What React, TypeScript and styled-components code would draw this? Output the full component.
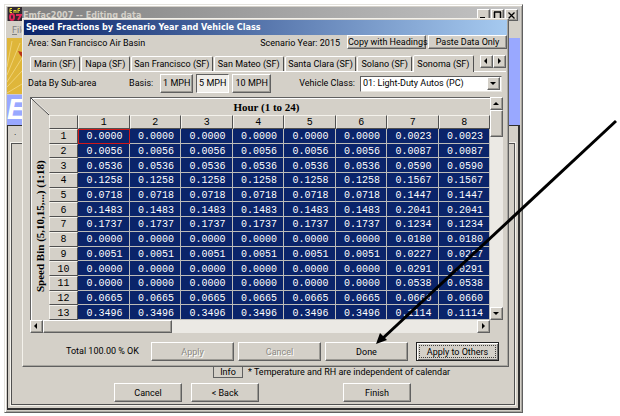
import React, { useState } from "react";
import styled, { createGlobalStyle, css } from "styled-components";

const face = "#d4d0c8";
const navy = "#0a246a";
const sans = `Roboto, "Liberation Sans", Arial, sans-serif`;

const GlobalStyle = createGlobalStyle`
  * { box-sizing: border-box; }
  body { margin: 0; background: #fff; color: #000; font: 9px/13px ${sans}; }
  button, select { font: inherit; color: inherit; margin: 0; padding: 0; border-radius: 0; }
`;

const raised = css`
  border: 1px solid;
  border-color: #fff #606060 #606060 #fff;
  box-shadow: inset -1px -1px 0 #9c9a94;
`;

const Stage = styled.main`
  position: relative;
  display: grid;
  grid-template-columns: minmax(0, 1fr) 97px;
  padding: 4px 0 3px 4px;
  overflow: hidden;
`;

const AppWindow = styled.section`
  display: grid;
  grid-template-columns: minmax(0, 1fr);
  background: ${face};
  border: 1px solid;
  border-color: #e4e2dc #606060 #606060 #e4e2dc;
  box-shadow: inset 1px 1px 0 #fff, inset -1px -1px 0 #a8a6a0;
  padding: 2px;
`;

const Backdrop = styled.div`
  grid-area: 1 / 1;
  display: flex;
  flex-direction: column;
  min-width: 0;
`;

const AppTitle = styled.header`
  display: flex;
  height: 14px;
  background: linear-gradient(90deg, #7e7e7e, #c4c4c4);
  color: ${face};
  font: bold 9px/14px "DejaVu Sans Condensed", "DejaVu Sans", sans-serif;
`;

const AppName = styled.span`
  flex: 1;
  padding: 1px 0 0 1px;
`;

const WindowButtons = styled.div`
  display: flex;
  gap: 1px;
  padding: 2px 2px 0 0;
`;

const WindowButton = styled.button`
  ${raised}
  display: grid;
  place-items: center;
  width: 13px;
  height: 12px;
  background: ${face};
`;

const MenuBar = styled.nav`
  height: 17px;
  padding: 3px 5px;
  color: #808080;
`;

const Banner = styled.div`
  height: 87px;
  background: #99a8ff;
`;

const Lower = styled.div`
  flex: 1;
  display: flex;
  flex-direction: column;
  border: 1px solid #303030;
  border-right-width: 2px;
  border-bottom-width: 2px;
  padding: 0 3px 3px 3px;
`;

const ToolStrip = styled.div`
  height: 17px;
  padding-left: 3px;
`;

const WizardFrame = styled.div`
  flex: 1;
  display: flex;
  flex-direction: column;
  justify-content: flex-end;
  border: 1px solid #505050;
  box-shadow: 0 0 0 1px #f4f2ec;
  padding-bottom: 2px;
`;

const NoteRow = styled.div`
  display: flex;
  gap: 5px;
  padding-left: 201px;
  height: 12px;
  white-space: nowrap;
`;

const InfoButton = styled.button`
  width: 30px;
  background: ${face};
  border: 1px solid #606060;
  line-height: 10px;
`;

const WizardButtons = styled.div`
  display: flex;
  gap: 9px;
  padding: 5px 0 0 102px;
`;

const PushButton = styled.button<{ $width?: number; $primary?: boolean; $apart?: boolean }>`
  ${raised}
  flex: none;
  width: ${(p) => p.$width ?? 83}px;
  height: 19px;
  background: ${face};
  line-height: 16px;
  margin-left: ${(p) => (p.$apart ? "75px" : 0)};
  ${(p) => p.$primary && css`
    border-color: #202020;
    box-shadow: inset 1px 1px 0 #fff, inset -1px -1px 0 #707070;
    outline: 1px dotted #404040;
    outline-offset: -4px;
  `}
  &:disabled { color: #8c8a84; text-shadow: 1px 1px 0 #fff; }
`;

const Dialog = styled.section`
  grid-area: 1 / 1;
  z-index: 1;
  align-self: start;
  margin: 11px 11px 43px 15px;
  background: ${face};
  border: 1px solid;
  border-color: #f4f2ec #606060 #606060 #f4f2ec;
  box-shadow: inset -1px -1px 0 #a8a6a0;
  padding: 1px 1px 5px;
`;

const DialogTitle = styled.h1`
  margin: 0;
  height: 15px;
  padding-left: 2px;
  background: linear-gradient(90deg, ${navy}, #a6caf0);
  color: #fff;
  font: bold 9px/14px "DejaVu Sans Condensed", "DejaVu Sans", sans-serif;
  white-space: nowrap;
`;

const AreaRow = styled.div`
  display: flex;
  gap: 2px;
  height: 20px;
  padding-left: 4px;
  white-space: nowrap;
`;

const Area = styled.span`
  flex: 1;
  padding-top: 2px;
`;

const Scenario = styled.span`
  padding: 2px 5px 0 0;
`;

const SmallButton = styled.button`
  ${raised}
  width: 79px;
  height: 14px;
  line-height: 11px;
  background: ${face};
  white-space: nowrap;
`;

const TabRow = styled.div`
  display: flex;
  align-items: flex-end;
  height: 17px;
  margin: 0 1px 0 6px;
  border-bottom: 1px solid #fff;
`;

const Tab = styled.button<{ $grow: number; $active: boolean }>`
  flex: ${(p) => p.$grow} 1 0;
  min-width: 0;
  height: ${(p) => (p.$active ? 17 : 15)}px;
  margin-bottom: ${(p) => (p.$active ? "-1px" : 0)};
  margin-right: 1px;
  background: ${face};
  border: 1px solid;
  border-color: #fff #505050 transparent #fff;
  border-bottom-width: 0;
  border-radius: 2px 2px 0 0;
  white-space: nowrap;
`;

const TabScroll = styled.div`
  display: flex;
  padding-left: 5px;
  align-self: flex-start;
`;

const ArrowButton = styled.button`
  ${raised}
  flex: none;
  display: grid;
  place-items: center;
  width: 13px;
  height: 13px;
  background: ${face};
`;

const OptionRow = styled.div`
  display: flex;
  align-items: center;
  height: 19px;
  margin: 2px 5px 4px 4px;
  white-space: nowrap;
`;

const SubArea = styled.span`
  flex: 1;
`;

const BasisGroup = styled.div`
  display: flex;
  align-items: center;
  gap: 3px;
  margin-right: 28px;
`;

const BasisLabel = styled.span`
  margin-right: 4px;
`;

const Basis = styled.button<{ $wide?: boolean }>`
  ${raised}
  width: ${(p) => (p.$wide ? 39 : 33)}px;
  height: 19px;
  background: ${face};
  &[aria-pressed="true"] {
    background: #f0eeea;
    border-color: #606060 #fff #fff #606060;
    box-shadow: none;
  }
`;

const ClassLabel = styled.label`
  margin-right: 5px;
`;

const SelectBox = styled.div`
  flex: none;
  display: flex;
  align-items: center;
  width: 142px;
  height: 16px;
  padding-right: 1px;
  background: #fff;
  border: 1px solid;
  border-color: #606060 #e8e6e0 #e8e6e0 #606060;
`;

const ClassSelect = styled.select`
  appearance: none;
  flex: 1;
  min-width: 0;
  height: 13px;
  padding-left: 2px;
  border: 0;
  background: transparent;
`;

const GridArea = styled.div`
  display: grid;
  grid-template-columns: minmax(0, 1fr) 13px;
  grid-template-rows: 223px 13px;
  margin: 0 4px 0 6px;
`;

const Sheet = styled.div`
  display: grid;
  grid-template-columns: 18px minmax(0, 1fr);
  grid-template-rows: 17px minmax(0, 1fr);
  border: solid #606060;
  border-width: 1px 0 0 1px;
  overflow: hidden;
  font-family: "Liberation Serif", serif;
  font-weight: bold;
`;

const Corner = styled.div`
  box-shadow: inset 1px 1px 0 #fff;
  svg { display: block; }
`;

const HourHeading = styled.div`
  padding-right: 6px;
  text-align: center;
  line-height: 16px;
  border-top: 1px solid #fff;
  font-size: 11px;
`;

const BinHeading = styled.div`
  writing-mode: vertical-rl;
  transform: rotate(180deg);
  padding-top: 28px;
  line-height: 16px;
  font-size: 11px;
  white-space: nowrap;
  border-right: 1px solid #fff;
`;

const DataTable = styled.table`
  width: 100%;
  height: 205px;
  table-layout: fixed;
  border-collapse: separate;
  border-spacing: 0;
  font: 10px/11px "Liberation Mono", monospace;
  th, td { padding: 1px 0 0; }
  th:first-child { width: 29px; }
`;

const HeadCell = styled.th`
  font-weight: normal;
  border: 1px solid;
  border-color: #f4f2ec #505050 #505050 #f4f2ec;
`;

const DataCell = styled.td<{ $current: boolean }>`
  background: ${navy};
  color: #fff;
  text-align: right;
  border: solid #bcbcb8;
  border-width: 0 1px 1px 0;
  && { padding: 2px 6px 0 0; }
  ${(p) => p.$current && css`
    outline: 1px solid #d01818;
    outline-offset: -1px;
  `}
`;

const ScrollTrack = styled.div<{ $vertical?: boolean }>`
  display: flex;
  flex-direction: ${(p) => (p.$vertical ? "column" : "row")};
  background: #ebe9e4;
`;

const Thumb = styled.div<{ $vertical?: boolean }>`
  ${raised}
  flex: none;
  background: ${face};
  ${(p) => (p.$vertical ? "height: 27px;" : "width: 28%;")}
`;

const Spacer = styled.div`
  flex: 1;
`;

const ActionRow = styled.div`
  display: flex;
  align-items: center;
  gap: 4px;
  margin: 9px 8px 0 42px;
`;

const Total = styled.output`
  flex: 1;
  white-space: nowrap;
`;

const LastAction = styled.div`
  display: flex;
  margin-left: 4px;
`;

const Pointer = styled.svg`
  position: absolute;
  z-index: 2;
  top: 118px;
  right: 0;
  pointer-events: none;
`;

type Direction = "up" | "down" | "left" | "right";
const triangles: Record<Direction, string> = {
  up: "0,5 3,2 6,5",
  down: "0,2 6,2 3,5",
  left: "4,0 4,6 1,3",
  right: "2,0 2,6 5,3",
};

const Arrow = ({ to, label }: { to: Direction; label: string }) => (
  <ArrowButton aria-label={label}>
    <svg width="7" height="7"><polygon points={triangles[to]} /></svg>
  </ArrowButton>
);

const tabs: [string, number][] = [
  ["Marin (SF)", 49], ["Napa (SF)", 49], ["San Francisco (SF)", 82],
  ["San Mateo (SF)", 70], ["Santa Clara (SF)", 72], ["Solano (SF)", 54], ["Sonoma (SF)", 61],
];

const fractions: [string, string][] = [
  ["0.0000", "0.0023"], ["0.0056", "0.0087"], ["0.0536", "0.0590"], ["0.1258", "0.1567"],
  ["0.0718", "0.1447"], ["0.1483", "0.2041"], ["0.1737", "0.1234"], ["0.0000", "0.0180"],
  ["0.0051", "0.0227"], ["0.0000", "0.0291"], ["0.0000", "0.0538"], ["0.0665", "0.0660"],
  ["0.3496", "0.1114"],
];
const hours = [1, 2, 3, 4, 5, 6, 7, 8];

const BannerArt = () => (
  <svg width="26" height="87" viewBox="0 0 26 87" aria-hidden="true">
    <rect width="26" height="57" fill="#dfb63a" />
    <g stroke="#efd277" strokeWidth="1">
      <path d="M0 44L15 20M0 49L15 33M0 55L15 46M0 37L13 5M0 29L5 3" />
    </g>
    <path d="M11 13l4 1v5l-2-2z" fill="#b83418" />
    <rect y="56" width="26" height="1" fill="#c9c7d8" />
    <text x="0" y="81" fill="#fff" fontFamily="Liberation Sans, sans-serif" fontSize="29" fontWeight="bold" fontStyle="italic">E</text>
  </svg>
);

const AppIcon = () => (
  <svg width="15" height="14" viewBox="0 0 15 14" aria-hidden="true">
    <rect x="1" width="14" height="14" fill="#302830" />
    <path d="M3 1.5v4M3 1.5h2M3 3.5h2M3 5.5h2M7 6V3l1 1 1-1v3M11 6V1.5h2M11 3.5h2" stroke="#e8dc30" fill="none" />
    <ellipse cx="5" cy="10" rx="2" ry="3" stroke="#e02858" strokeWidth="2" fill="none" />
    <path d="M9 8h5l-3 5" stroke="#e02858" strokeWidth="2" fill="none" />
  </svg>
);

export default function App() {
  const [tab, setTab] = useState("Sonoma (SF)");
  const [basis, setBasis] = useState("5 MPH");
  return (
    <>
      <GlobalStyle />
      <Stage>
        <AppWindow>
          <Backdrop>
            <AppTitle>
              <AppIcon />
              <AppName>Emfac2007 -- Editing data</AppName>
              <WindowButtons>
                <WindowButton aria-label="Minimize">
                  <svg width="9" height="9"><path d="M1 7h5" stroke="#000" strokeWidth="2" /></svg>
                </WindowButton>
                <WindowButton aria-label="Maximize">
                  <svg width="9" height="9"><path d="M1 1h7M1.5 1v8M7.5 1v8" stroke="#000" strokeWidth="1.5" /></svg>
                </WindowButton>
                <WindowButton aria-label="Close">
                  <svg width="9" height="9"><path d="M1.5 1.5l6 6M7.5 1.5l-6 6" stroke="#000" strokeWidth="1.3" /></svg>
                </WindowButton>
              </WindowButtons>
            </AppTitle>
            <MenuBar><u>F</u>ile</MenuBar>
            <Banner><BannerArt /></Banner>
            <Lower>
              <ToolStrip>.</ToolStrip>
              <WizardFrame>
                <NoteRow>
                  <InfoButton>Info</InfoButton>
                  <span>* Temperature and RH are independent of calendar</span>
                </NoteRow>
                <WizardButtons>
                  <PushButton $width={68}>Cancel</PushButton>
                  <PushButton $width={68}>&lt; Back</PushButton>
                  <PushButton $width={68} $apart>Finish</PushButton>
                </WizardButtons>
              </WizardFrame>
            </Lower>
          </Backdrop>

          <Dialog role="dialog" aria-labelledby="dialog-title">
            <DialogTitle id="dialog-title">Speed Fractions by Scenario Year and Vehicle Class</DialogTitle>
            <AreaRow>
              <Area>Area: San Francisco Air Basin</Area>
              <Scenario>Scenario Year: 2015</Scenario>
              <SmallButton>Copy with Headings</SmallButton>
              <SmallButton>Paste Data Only</SmallButton>
            </AreaRow>
            <TabRow role="tablist">
              {tabs.map(([name, grow]) => (
                <Tab key={name} role="tab" aria-selected={tab === name} $active={tab === name} $grow={grow} onClick={() => setTab(name)}>
                  {name}
                </Tab>
              ))}
              <TabScroll>
                <Arrow to="left" label="Previous tabs" />
                <Arrow to="right" label="Next tabs" />
              </TabScroll>
            </TabRow>
            <OptionRow>
              <SubArea>Data By Sub-area</SubArea>
              <BasisGroup role="group" aria-label="Basis">
                <BasisLabel>Basis:</BasisLabel>
                {["1 MPH", "5 MPH", "10 MPH"].map((b) => (
                  <Basis key={b} $wide={b === "10 MPH"} aria-pressed={basis === b} onClick={() => setBasis(b)}>{b}</Basis>
                ))}
              </BasisGroup>
              <ClassLabel htmlFor="vehicle-class">Vehicle Class:</ClassLabel>
              <SelectBox>
                <ClassSelect id="vehicle-class">
                  <option>01: Light-Duty Autos (PC)</option>
                </ClassSelect>
                <Arrow to="down" label="Open vehicle classes" />
              </SelectBox>
            </OptionRow>
            <GridArea>
              <Sheet>
                <Corner>
                  <svg width="18" height="17"><path d="M0 0L18 17" stroke="#404040" /><path d="M1 0L18 16" stroke="#fff" strokeWidth="0.6" /></svg>
                </Corner>
                <HourHeading>Hour (1 to 24)</HourHeading>
                <BinHeading>Speed Bin (5,10,15,...) (1:18)</BinHeading>
                <DataTable>
                  <thead>
                    <tr>
                      <HeadCell aria-label="Speed bin" />
                      {hours.map((h) => <HeadCell key={h} scope="col">{h}</HeadCell>)}
                    </tr>
                  </thead>
                  <tbody>
                    {fractions.map(([early, late], row) => (
                      <tr key={row}>
                        <HeadCell scope="row">{row + 1}</HeadCell>
                        {hours.map((h) => (
                          <DataCell key={h} $current={row === 0 && h === 1}>{h < 7 ? early : late}</DataCell>
                        ))}
                      </tr>
                    ))}
                  </tbody>
                </DataTable>
              </Sheet>
              <ScrollTrack $vertical>
                <Arrow to="up" label="Scroll up" />
                <Thumb $vertical />
                <Spacer />
                <Arrow to="down" label="Scroll down" />
              </ScrollTrack>
              <ScrollTrack>
                <Arrow to="left" label="Scroll left" />
                <Thumb />
                <Spacer />
                <Arrow to="right" label="Scroll right" />
              </ScrollTrack>
            </GridArea>
            <ActionRow>
              <Total>Total 100.00 % OK</Total>
              <PushButton disabled>Apply</PushButton>
              <PushButton disabled>Cancel</PushButton>
              <PushButton>Done</PushButton>
              <LastAction><PushButton $primary>Apply to Others</PushButton></LastAction>
            </ActionRow>
          </Dialog>
        </AppWindow>
        <Pointer width="246" height="230" viewBox="0 0 246 230" aria-hidden="true">
          <path d="M242 3L8 221" stroke="#000" strokeWidth="3" />
          <polygon points="2,226 6,215 13,222" />
        </Pointer>
      </Stage>
    </>
  );
}
